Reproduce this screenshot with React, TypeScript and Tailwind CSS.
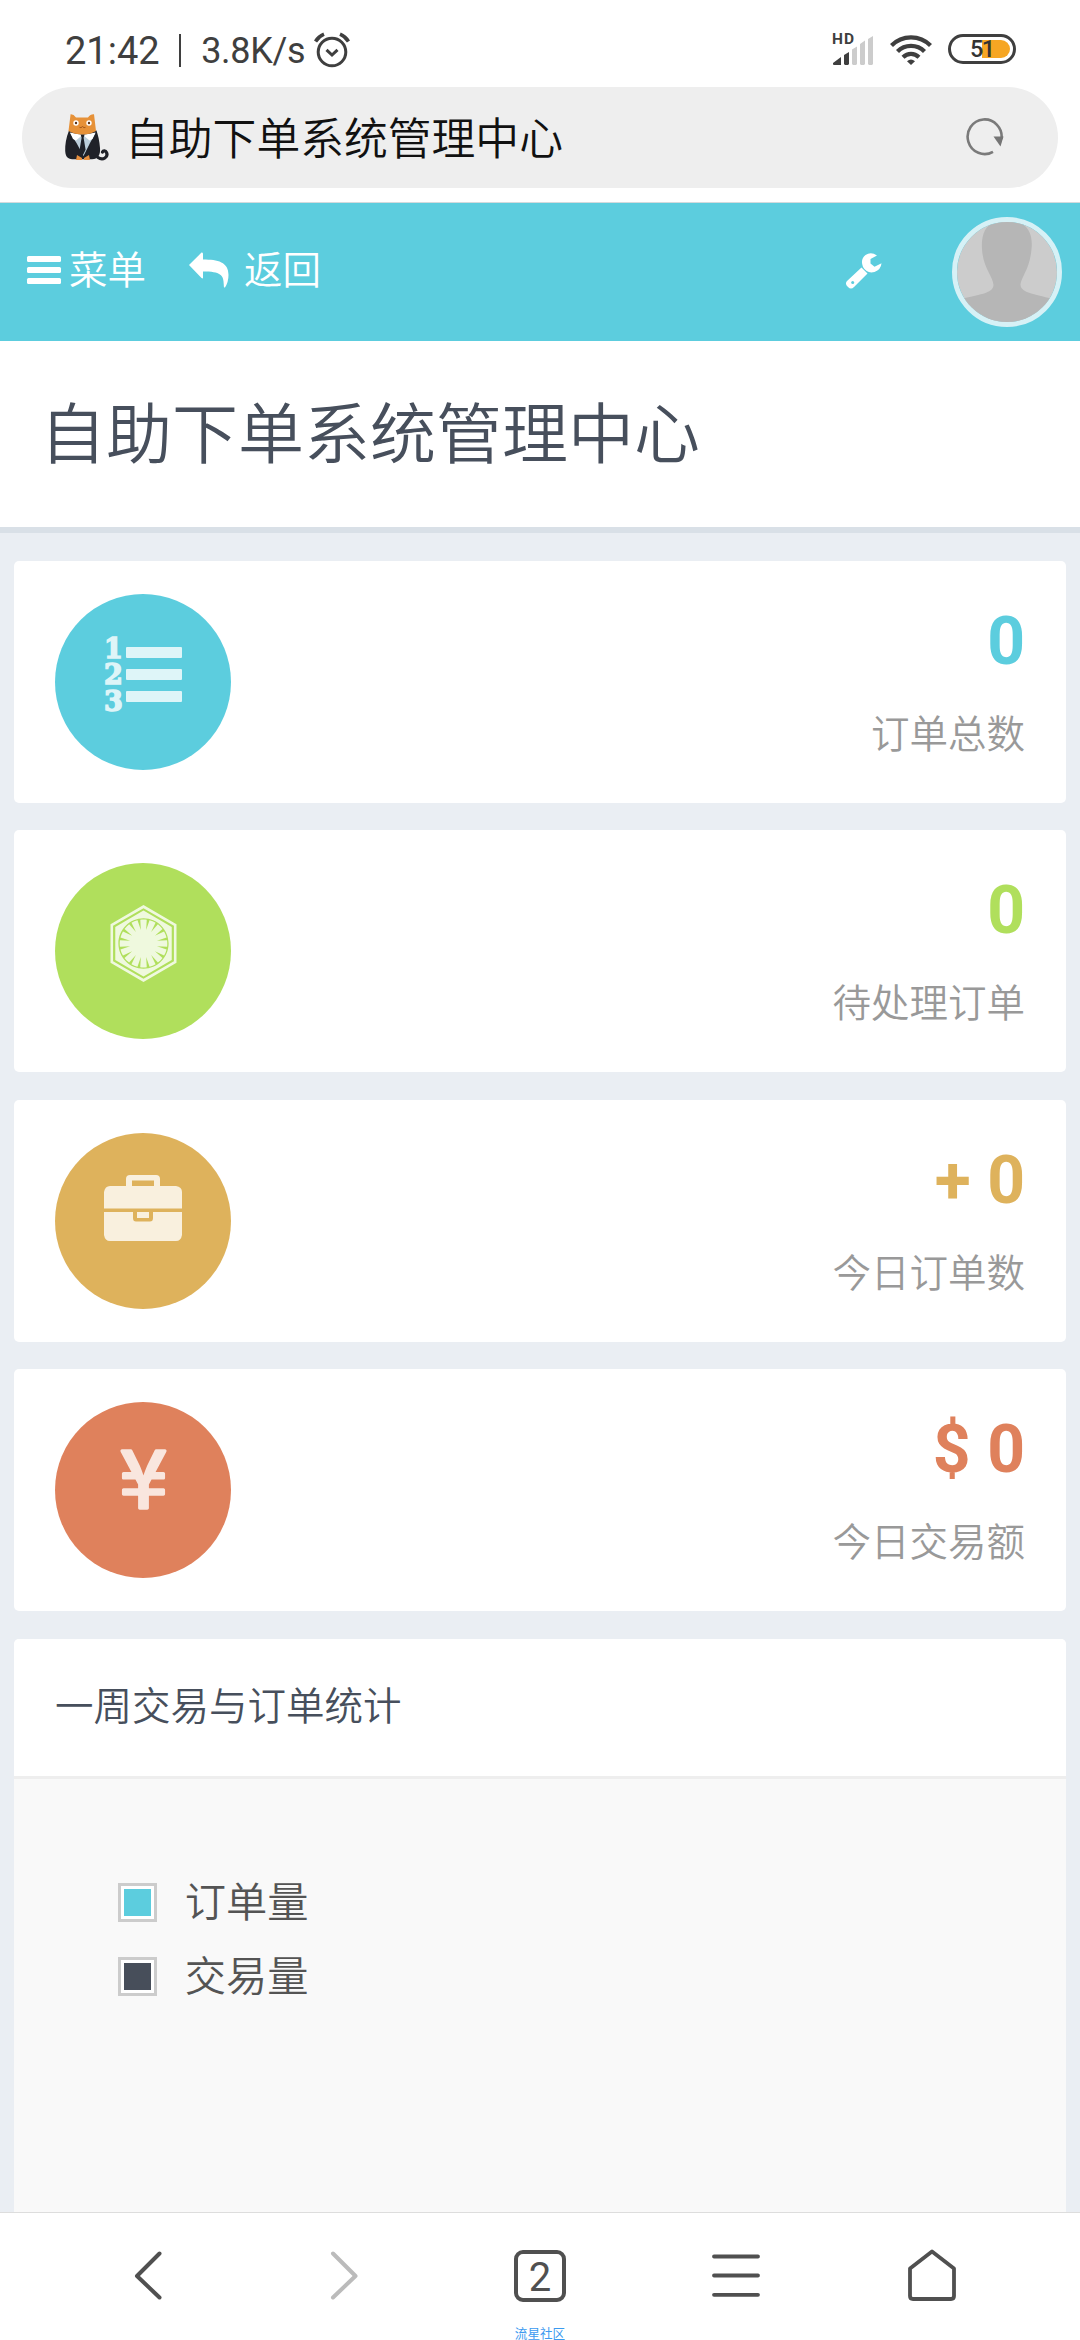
import React from 'react';
import { FaFirstOrder, FaYenSign } from 'react-icons/fa';

const Cat = () => (
  <svg width="44" height="47" viewBox="0 0 44 47">
    <path d="M33 43.5C38 47 43.5 43 41.5 38.5C40.5 36 38 37 37.5 38" fill="none" stroke="#1f2128" strokeWidth="3.2" strokeLinecap="round" />
    <path d="M4 16.5C1 24 0 31 .2 37C.5 44 4 45.3 9 45.3H27C33 45 35.6 41 35 34C34.5 27 33 21 31.5 16.5Z" fill="#1f2128" />
    <path d="M5 19C10 21 25 21 30.5 19L25 29L18.5 42L11.5 29Z" fill="#bccedb" />
    <path d="M5 18.5L17.5 21L11 26.5L8 25ZM30.5 18.5L18 21L24.5 26.5L27.5 25Z" fill="#fff" />
    <path d="M15.6 20.5h4l-1 3.2l2 12l-3 6l-3-6l2-12Z" fill="#1f2128" />
    <path d="M11 46l1-5l5 3v2ZM19 46v-2l5-3l1 5Z" fill="#e8903f" />
    <path d="M5.6.3Q8.5 0 11 3.6H23Q25.5 0 29 .3L31 17Q25 20.5 17.5 20.5T3.5 17Z" fill="#e69138" />
    <circle cx="11" cy="9" r="2.7" fill="#fff" />
    <circle cx="24" cy="9" r="2.7" fill="#fff" />
    <circle cx="11" cy="9" r="1.2" fill="#5b3315" />
    <circle cx="24" cy="9" r="1.2" fill="#5b3315" />
    <path d="M14.5 13.3q1.5 1.2 3-.8q1.5 2 3 .8" fill="none" stroke="#a2571c" strokeWidth="1" />
  </svg>
);

const StatusBar = () => (
  <div className="h-[87px] flex items-center pl-[65px] pr-[64px] pt-[14px] text-[#3f3f3f]">
    <span className="text-[38px] leading-[44px]">21:42</span>
    <span className="w-[2.5px] h-[33px] bg-[#3f3f3f] ml-[19px] mr-[20px]" />
    <span className="text-[36px] leading-[44px] tracking-[-0.3px]">3.8K/s</span>
    <svg className="ml-[9px] -mt-[2px]" width="36" height="36" viewBox="0 0 36 36" fill="none" stroke="#3f3f3f" strokeWidth="3">
      <circle cx="18" cy="20" r="13.8" />
      <path d="M12.5 17.8L18 23L23.5 17.8" />
      <path d="M1.5 9.5Q4.5 4.5 10 2.2M34.5 9.5Q31.5 4.5 26 2.2" strokeWidth="3.6" />
    </svg>
    <div className="ml-auto relative w-[42px] h-[34px] -mt-[4px]">
      <span className="absolute left-0 -top-[2px] text-[15.5px] leading-[18px] font-bold tracking-[1px]">HD</span>
      <svg width="42" height="34" viewBox="0 -2 42 34">
        <path d="M1 30V29L9 23V31H2Q1 31 1 30ZM12 30V21L17 18V30L16 31H13Z" fill="#3f3f3f" />
        <path d="M20 30V15.5L25 12.5V30L24 31H21ZM28 30V10L33 6.5V30L32 31H29ZM36 30V5L41 2V30L40 31H37Z" fill="#ccc" />
      </svg>
    </div>
    <svg className="ml-[16px] -mt-[3px]" width="42" height="32" viewBox="0 0 42 32" fill="none" stroke="#3f3f3f" strokeWidth="4.2">
      <path d="M1.5 12.5Q9.5 4.3 21 4.3T40.5 12.5" />
      <path d="M7.5 18.5Q13 12.8 21 12.8T34.5 18.5" />
      <path d="M13 24.2Q16.5 20.8 21 20.8T29 24.2" />
      <path d="M17 28.3Q21 24.7 25 28.3L21 32Z" fill="#3f3f3f" stroke="none" />
    </svg>
    <div className="relative ml-[16px] -mt-[3px] w-[68px] h-[30px] rounded-full border-3 border-[#3f3f3f] flex items-center justify-end pr-[3px]">
      <span className="w-[28px] h-[18px] bg-[#f6a623] rounded-r-full" />
      <span className="absolute left-[19px] top-0 text-[23.5px] leading-[25px] font-medium tracking-[-1.6px] text-[#333]">51</span>
    </div>
  </div>
);

const AddressBar = () => (
  <div className="h-[116px] border-b border-[#d3dadd]">
    <div className="h-[101px] ml-[22px] mr-[22px] rounded-full bg-[#eee] flex items-center pl-[43px] pr-[54px]">
      <Cat />
      <span className="ml-[16px] mt-[4px] text-[43.8px] leading-[60px] font-[350] text-[#111] whitespace-nowrap">自助下单系统管理中心</span>
      <svg className="ml-auto -mt-[2px]" width="38" height="38" viewBox="0 0 38 38">
        <path d="M27 33.8A17 17.3 0 1 1 35.5 21" fill="none" stroke="#7a7a7a" strokeWidth="2.6" />
        <path d="M27.5 18.5H37.5L34.5 28.5Z" fill="#757575" />
      </svg>
    </div>
  </div>
);

const Header = () => (
  <div className="h-[138px] bg-[#5ccdde] flex items-center pl-[27px] pr-[18px] text-white">
    <div className="flex items-center -mt-[4px]">
      <div className="flex flex-col gap-[5px]">
        <span className="w-[34px] h-[6px] rounded-[1.5px] bg-white" />
        <span className="w-[34px] h-[6px] rounded-[1.5px] bg-white" />
        <span className="w-[34px] h-[6px] rounded-[1.5px] bg-white" />
      </div>
      <span className="ml-[8px] mt-[2px] text-[38.5px] leading-[54px] font-[350]">菜单</span>
      <svg className="ml-[43px]" width="40" height="36" viewBox="0 0 40 36" fill="#fff">
        <path d="M0 13L12.5 .6Q14 0 14 2V7.5C29 7.5 39.5 10 39.5 23Q39.5 30 36 35.5Q34.8 36 34.8 34C35 23 32 19.5 14 19.5V25.5Q14 27 12.5 26Z" />
      </svg>
      <span className="ml-[15px] mt-[2px] text-[38.5px] leading-[54px] font-[350]">返回</span>
    </div>
    <svg className="ml-auto -mt-[2px]" width="36" height="36" viewBox="0 0 36 36">
      <path d="M15.5 14.5L21.5 20.5L8 34Q5 37 2 34Q-1.5 31 1 28Z" fill="#fff" />
      <path d="M31 2.5Q25-1.5 19.5 2Q14 6.5 17 14Q21 21 28.5 19Q35 16.5 35.5 10.2L28.5 13.7L24.5 10.5V6Z" fill="#fff" />
      <circle cx="6.7" cy="29.5" r="1.5" fill="#5ccdde" />
    </svg>
    <div className="ml-[70px] size-[110px] rounded-full border-5 border-[#d6f1f6] overflow-hidden">
      <svg width="100" height="100" viewBox="0 0 100 100">
        <rect width="100" height="100" fill="#ccc" />
        <path d="M38 0C28 3 24 14 25 27C26 46 36 54 36.5 63C36 72 22 72 0 78V100H100V78C78 72 63 71 63.5 62C65 54 73 46 74.5 27C76 14 72 3 60 0Z" fill="#b6b6b6" />
      </svg>
    </div>
  </div>
);

const ListIcon = () => (
  <div className="flex w-[78px] h-[78px] opacity-80 text-white">
    <div className="w-[22px] flex flex-col font-['DejaVu_Serif',serif] font-bold text-[27px] leading-[26.5px] [-webkit-text-stroke:1.5px_#fff]">
      <span>1</span>
      <span>2</span>
      <span>3</span>
    </div>
    <div className="flex flex-col gap-[11px] pt-[11px]">
      <span className="w-[56px] h-[11px] rounded-[1px] bg-white" />
      <span className="w-[56px] h-[11px] rounded-[1px] bg-white" />
      <span className="w-[56px] h-[11px] rounded-[1px] bg-white" />
    </div>
  </div>
);

const BriefcaseIcon = () => (
  <svg width="78" height="67" viewBox="0 0 78 67" fill="#fff" fillOpacity=".8">
    <path d="M22 11V4Q22 0 26 0H52Q56 0 56 4V11H72Q78 12 78 17V33.5H0V17Q1 11 6 11ZM28 5.5V11H50V5.5Z" fillRule="evenodd" />
    <path d="M0 37H29V43Q29 46.5 32 46.5H46Q49 46.5 49 43V37H78V60Q77 66 72 66H6Q1 66 0 60Z" />
    <rect x="33" y="37" width="12" height="6" />
  </svg>
);

const stats = [
  { value: '0', label: '订单总数', bg: 'bg-[#5ccdde]', color: 'text-[#5ccdde]', icon: <ListIcon />, pad: 'pt-[42px]' },
  { value: '0', label: '待处理订单', bg: 'bg-[#b0df5c]', color: 'text-[#b0df5c]', icon: <FaFirstOrder size={77} className="text-white/80" />, pad: 'pt-[42px]' },
  { value: '+ 0', label: '今日订单数', bg: 'bg-[#deb25c]', color: 'text-[#deb25c]', icon: <BriefcaseIcon />, pad: 'pt-[42px]' },
  { value: '$ 0', label: '今日交易额', bg: 'bg-[#df815c]', color: 'text-[#df815c]', icon: <FaYenSign size={69} className="text-white/80" />, pad: 'pt-[43px]' },
];

const legend = [
  { label: '订单量', bg: 'bg-[#5ccdde]' },
  { label: '交易量', bg: 'bg-[#474e5a]' },
];

const BottomNav = () => (
  <div className="h-[128px] shrink-0 bg-white border-t border-[#ddd] flex flex-col">
    <div className="grid grid-cols-5 px-[50px] pt-[36px] justify-items-center">
      <svg width="52" height="54" viewBox="0 0 52 54" fill="none" stroke="#505050" strokeWidth="4" strokeLinecap="round" strokeLinejoin="round">
        <path d="M37.5 4.5L15 27L37.5 48.5" />
      </svg>
      <svg width="52" height="54" viewBox="0 0 52 54" fill="none" stroke="#bbb" strokeWidth="4" strokeLinecap="round" strokeLinejoin="round">
        <path d="M15 4.5L37.5 27L15 48.5" />
      </svg>
      <div className="w-[52px] h-[52px] mt-px rounded-[9px] border-4 border-[#505050] flex items-center justify-center pt-[3px] text-[40px] leading-[44px] text-[#505050]">
        2
      </div>
      <svg width="52" height="54" viewBox="0 0 52 54" stroke="#505050" strokeWidth="3.8" strokeLinecap="round">
        <path d="M4 7.5H48M4 26.5H48M4 45.8H48" />
      </svg>
      <svg width="52" height="54" viewBox="0 0 52 54" fill="none" stroke="#505050" strokeWidth="3.8" strokeLinejoin="round">
        <path d="M26 2.5L48 19.5V47Q48 50 45 50H7Q4 50 4 47V19.5Z" />
      </svg>
    </div>
    <div className="mt-auto text-center text-[12.6px] leading-[13px] text-[#3b9af0]">流星社区</div>
  </div>
);

const App = () => {
  return (
    <div className="w-[1080px] h-[2340px] overflow-hidden flex flex-col bg-white font-['Roboto','Noto_Sans_CJK_SC',sans-serif]">
      <StatusBar />
      <AddressBar />
      <Header />

      <div className="h-[192px] shrink-0 pl-[40px] pt-[3px] border-b-6 border-[#d9e0e7] flex items-center">
        <h1 className="text-[66px] leading-[90px] font-[350] text-[#474f5c]">自助下单系统管理中心</h1>
      </div>

      <div className="flex-1 min-h-0 overflow-hidden bg-[#eaeef3] px-[13.75px] pt-[27.75px] flex flex-col gap-[27.5px]">
        {stats.map((s) => (
          <div key={s.label} className="h-[242px] shrink-0 rounded-[5px] bg-white flex justify-between px-[41.25px] pt-[33px]">
            <div className={`size-[176px] rounded-full flex justify-center ${s.bg} ${s.pad}`}>{s.icon}</div>
            <div className="text-right pt-[2px]">
              <div className={`text-[66px] leading-[92px] font-bold ${s.color}`}>{s.value}</div>
              <div className="mt-[20px] text-[38.5px] leading-[54px] font-[350] text-[#999]">{s.label}</div>
            </div>
          </div>
        ))}

        <div className="flex-1 rounded-t-[5px] overflow-hidden bg-[#f9f9f9]">
          <div className="h-[140px] bg-white border-b-3 border-[#eee] px-[41.25px] pt-[41px]">
            <h4 className="text-[38.5px] leading-[54px] font-[350] text-[#474f5c]">一周交易与订单统计</h4>
          </div>
          <div className="pl-[104px] pt-[87px]">
            {legend.map((l) => (
              <div key={l.label} className="h-[74px] flex items-center">
                <span className="size-[39px] border-3 border-[#ccc] bg-white p-[3px] flex">
                  <span className={`flex-1 ${l.bg}`} />
                </span>
                <span className="ml-[28px] text-[41.25px] leading-[58px] font-[350] text-[#545454]">{l.label}</span>
              </div>
            ))}
          </div>
        </div>
      </div>

      <BottomNav />
    </div>
  );
};

export default App;
